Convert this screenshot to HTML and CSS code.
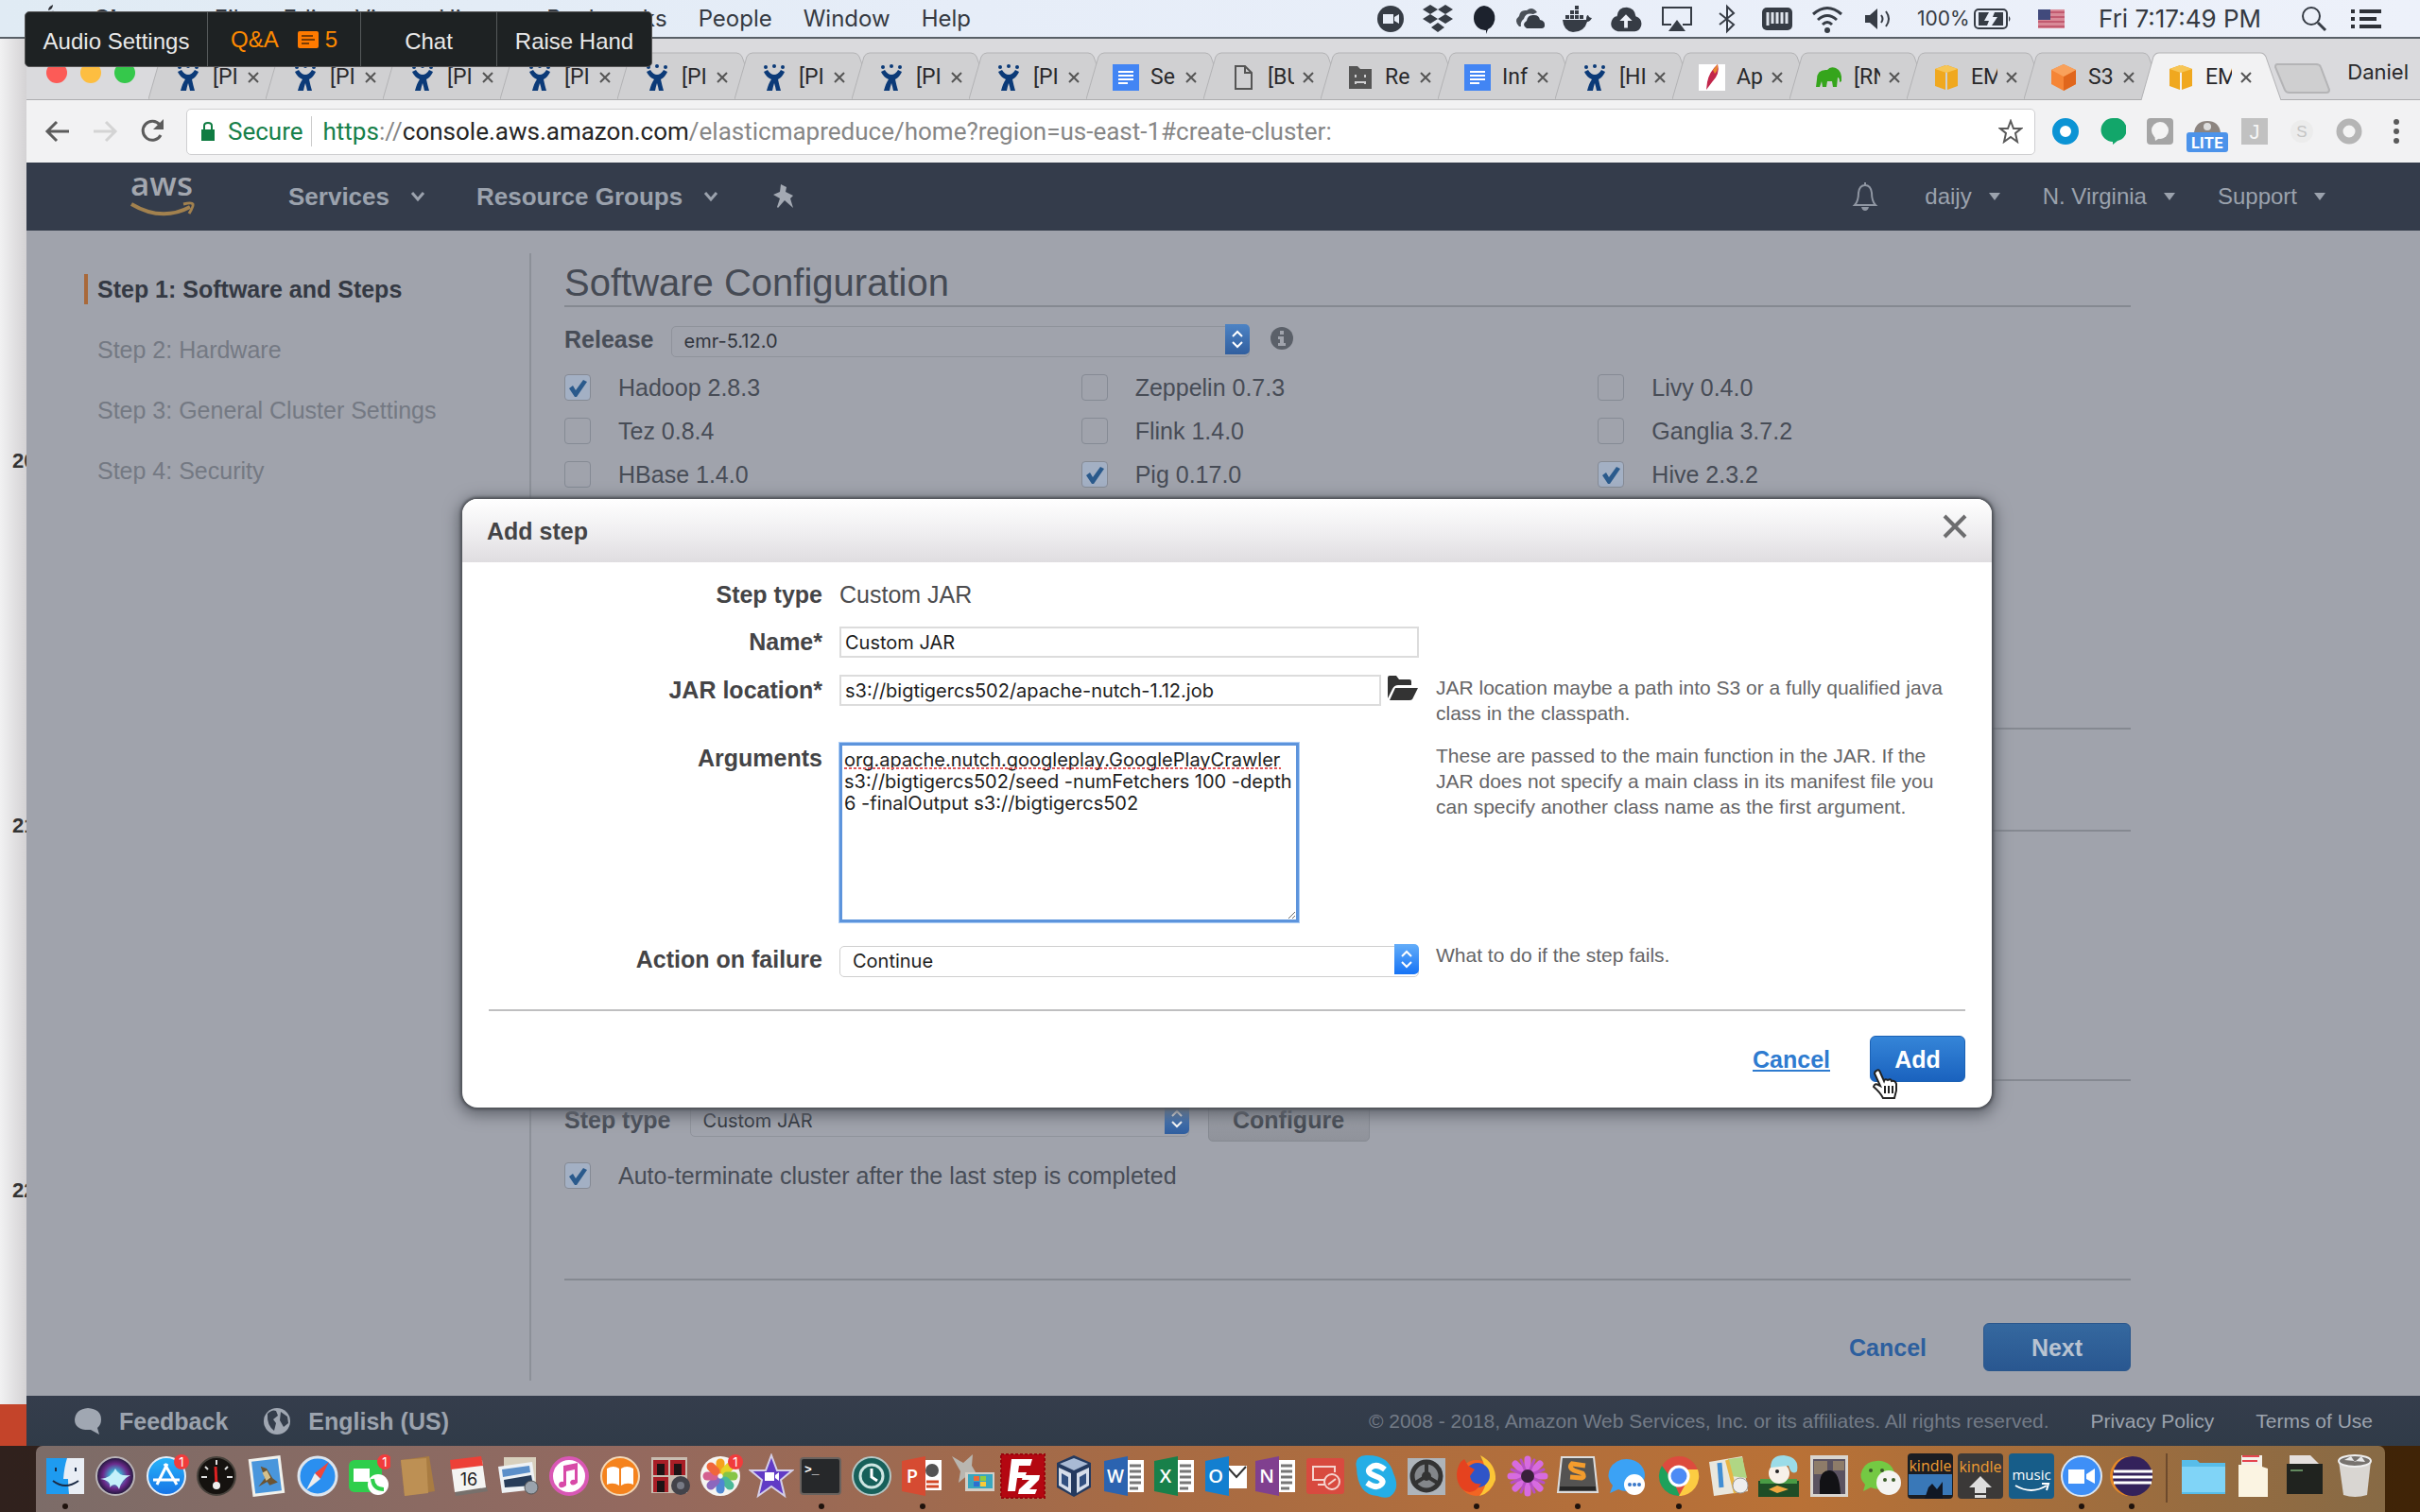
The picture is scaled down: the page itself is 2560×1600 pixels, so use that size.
FILE: index.html
```html
<!DOCTYPE html>
<html lang="en">
<head>
<meta charset="utf-8">
<title>EMR - Create Cluster</title>
<link rel="stylesheet" href="styles.css">
</head>
<body>
<svg class="defs" aria-hidden="true">
  <defs>
    <symbol id="tab" viewBox="0 0 148 50" preserveAspectRatio="none"><path d="M0 50 13 5Q15 1 19 1H126Q130 1 132 5L148 50"/></symbol>
    <symbol id="close" viewBox="0 0 14 14"><path d="M2 2 12 12M12 2 2 12" stroke="#555" stroke-width="2" fill="none"/></symbol>
    <symbol id="jira" viewBox="0 0 28 28"><g fill="#0b3a78"><circle cx="5" cy="3" r="2"/><circle cx="14" cy="2" r="2"/><circle cx="23" cy="3" r="2"/><path d="M3 8 7 6Q10 11 14 11T21 6L25 8Q23 13 18 16 19 21 21 28H16Q15 23 14 20 13 23 12 28H6Q8 20 11 16 5 13 3 8Z"/></g></symbol>
    <symbol id="doc" viewBox="0 0 28 28"><path fill="#4285f4" d="M0 0H28V28H0Z"/><path stroke="#fff" stroke-width="2" d="M6 8H22M6 12H22M6 16H22M6 20H16"/></symbol>
    <symbol id="emr" viewBox="0 0 28 28"><path fill="#f0a81f" d="M2 5 13 1 13 27 2 23ZM15 1 26 5V23L15 27Z"/><path fill="#f7c656" d="M2 5 14 1 26 5 14 9Z"/></symbol>
    <symbol id="tick" viewBox="0 0 28 28"><path fill="#2a5a8c" d="M5 15 9 12 12 17 20 6 24 8 13 24H11Z"/></symbol>
    <symbol id="updown" viewBox="0 0 26 32"><path fill="none" stroke="#fff" stroke-width="2" d="M8 13 13 8 18 13M8 19 13 24 18 19"/></symbol>
    <symbol id="caret" viewBox="0 0 14 10"><path fill="currentColor" d="M1 1H13L7 9Z"/></symbol>
    <symbol id="chev" viewBox="0 0 16 12"><path fill="none" stroke="currentColor" stroke-width="3" d="M2 2 8 9 14 2"/></symbol>
    <symbol id="pages" viewBox="0 0 18 34"><path fill="#fff" d="M0 0H18V34H0Z"/><path stroke="#777" stroke-width="3" d="M3 6H15M3 12H15M3 18H15M3 24H15M3 30H12"/></symbol>
    <radialGradient id="siri"><stop stop-color="#e8fbff"/><stop offset=".3" stop-color="#3fa9cf"/><stop offset=".65" stop-color="#6b2a8c"/><stop offset="1" stop-color="#1b1635"/></radialGradient>
    <linearGradient id="sky" x2="0" y2="1"><stop stop-color="#27b4fa"/><stop offset="1" stop-color="#1673e6"/></linearGradient>
  </defs>
</svg>

<header class="menubar">
  <nav class="menus" aria-label="Application menu">
    <svg class="apple" viewBox="0 0 22 28"><path fill="#2e3138" d="M15 0Q15 5 10 6 10 2 15 0ZM11 8Q16 5 20 9 16 12 17 16 18 20 21 21 18 28 14 28 11 26 8 28 4 28 1 20-1 10 5 8 8 7 11 8Z"/></svg>
    <b class="app-name">Chrome</b><span>File</span><span>Edit</span><span>View</span><span>History</span><span>Bookmarks</span><span>People</span><span>Window</span><span>Help</span>
  </nav>
  <div class="status">
    <div class="group tight">
      <svg viewBox="0 0 32 32"><circle cx="16" cy="16" r="14" fill="#363c45"/><path fill="#e7edf7" d="M8 11H19V21H8ZM20 14 25 11V21L20 18Z"/></svg>
      <svg viewBox="0 0 32 32"><path fill="#363c45" d="M8 1 16 6 8 11 0 6ZM24 1 32 6 24 11 16 6ZM8 11 16 16 8 21 0 16ZM24 11 32 16 24 21 16 16ZM16 20 23 25 16 30 9 25Z"/></svg>
      <svg viewBox="0 0 32 32"><path fill="#1c222d" d="M16 2A12 13 0 0 1 20 27L18 32V28A12 13 0 0 1 16 2Z"/></svg>
      <svg viewBox="0 0 32 32"><path fill="#4a5058" d="M4 24Q-2 18 4 13 5 6 12 7 18 2 23 9L19 11Q11 9 9 16 5 19 6 24Z"/><path fill="#363c45" d="M12 26Q6 22 12 18 13 11 20 12 25 12 26 17 32 18 31 24 30 26 28 26Z"/></svg>
      <svg viewBox="0 0 32 32"><path fill="#363c45" d="M1 17H26Q26 12 28 12 29 15 32 15 30 19 27 19 24 30 12 30 2 29 1 17ZM4 12H8V16H4ZM9 12H13V16H9ZM14 12H18V16H14ZM19 12H23V16H19ZM9 7H13V11H9ZM14 7H18V11H14ZM14 2H18V6H14Z"/></svg>
    </div>
    <div class="group">
      <svg viewBox="0 0 36 32"><path fill="#363c45" d="M9 30Q-1 27 2 18 4 13 8 13 9 3 19 3 28 4 29 13 37 16 35 24 33 30 28 30Z"/><path fill="#eef2fa" d="M18 11 25 18H20V26H16V18H11Z"/></svg>
      <svg viewBox="0 0 32 32"><path fill="none" stroke="#363c45" stroke-width="2" d="M10 22H1V4H31V22H22"/><path fill="#363c45" d="M16 17 25 29H7Z"/></svg>
      <svg viewBox="0 0 32 32"><path fill="none" stroke="#363c45" stroke-width="2" d="M8 10 23 22 16 29V3L23 10 8 22"/></svg>
      <svg viewBox="0 0 32 32"><rect y="4" width="32" height="24" rx="5" fill="#363c45"/><path stroke="#dfe4ec" stroke-width="3" d="M6 9V23M11 9V21M16 9V21M21 9V21M26 9V21"/></svg>
      <svg viewBox="0 0 32 32"><path fill="none" stroke="#363c45" stroke-width="3" d="M1 11Q16-2 31 11M6 17Q16 8 26 17M11 22Q16 17 21 22"/><circle cx="16" cy="28" r="3" fill="#363c45"/></svg>
      <svg viewBox="0 0 32 32"><path fill="#363c45" d="M3 12H8L16 5V27L8 20H3Z"/><path fill="none" stroke="#363c45" stroke-width="2" d="M20 12Q23 16 20 20M25 8Q31 16 25 24"/></svg>
    </div>
    <span class="pct">100%</span>
    <svg class="battery" viewBox="0 0 40 24"><rect x="1" y="2" width="34" height="20" rx="4" fill="none" stroke="#363c45" stroke-width="2"/><path fill="#363c45" d="M5 5H16L11 14H16L14 19H5ZM22 5H31V19H19L25 10H20ZM37 9Q40 12 37 15Z"/></svg>
    <svg class="flag" viewBox="0 0 28 20"><path fill="#d98a98" d="M0 0H28V20H0Z"/><path stroke="#c25a70" stroke-width="2" d="M0 3H28M0 8H28M0 13H28M0 18H28"/><path fill="#414a7c" d="M0 0H13V11H0Z"/></svg>
    <time>Fri 7:17:49 PM</time>
    <svg class="search" viewBox="0 0 28 28"><circle cx="11" cy="11" r="9" fill="none" stroke="#363c45" stroke-width="2"/><path stroke="#363c45" stroke-width="3" d="M18 18 26 26"/></svg>
    <svg viewBox="0 0 32 24"><path stroke="#2e3138" stroke-width="4" d="M0 4H4M0 12H4M0 20H4M9 4H32M9 12H27M9 20H32"/></svg>
  </div>
</header>

<div class="desktop">
  <div class="behind" aria-hidden="true"><span>20</span><span>21</span><span>22</span></div>
  <div class="window">
    <div class="tabstrip">
      <div class="lights"><i class="red"></i><i class="amber"></i><i class="green"></i></div>
      <div class="tabs">
        <div class="tab"><svg class="shape"><use href="#tab"/></svg><svg class="ico"><use href="#jira"/></svg><span>[PI</span><svg class="x"><use href="#close"/></svg></div>
        <div class="tab"><svg class="shape"><use href="#tab"/></svg><svg class="ico"><use href="#jira"/></svg><span>[PI</span><svg class="x"><use href="#close"/></svg></div>
        <div class="tab"><svg class="shape"><use href="#tab"/></svg><svg class="ico"><use href="#jira"/></svg><span>[PI</span><svg class="x"><use href="#close"/></svg></div>
        <div class="tab"><svg class="shape"><use href="#tab"/></svg><svg class="ico"><use href="#jira"/></svg><span>[PI</span><svg class="x"><use href="#close"/></svg></div>
        <div class="tab"><svg class="shape"><use href="#tab"/></svg><svg class="ico"><use href="#jira"/></svg><span>[PI</span><svg class="x"><use href="#close"/></svg></div>
        <div class="tab"><svg class="shape"><use href="#tab"/></svg><svg class="ico"><use href="#jira"/></svg><span>[PI</span><svg class="x"><use href="#close"/></svg></div>
        <div class="tab"><svg class="shape"><use href="#tab"/></svg><svg class="ico"><use href="#jira"/></svg><span>[PI</span><svg class="x"><use href="#close"/></svg></div>
        <div class="tab"><svg class="shape"><use href="#tab"/></svg><svg class="ico"><use href="#jira"/></svg><span>[PI</span><svg class="x"><use href="#close"/></svg></div>
        <div class="tab"><svg class="shape"><use href="#tab"/></svg><svg class="ico"><use href="#doc"/></svg><span>Se</span><svg class="x"><use href="#close"/></svg></div>
        <div class="tab"><svg class="shape"><use href="#tab"/></svg><svg class="ico" viewBox="0 0 28 28"><path fill="none" stroke="#555" stroke-width="2" d="M6 2H16L23 9V26H6ZM16 2V9H23"/></svg><span>[BU</span><svg class="x"><use href="#close"/></svg></div>
        <div class="tab"><svg class="shape"><use href="#tab"/></svg><svg class="ico" viewBox="0 0 28 28"><path fill="#555" d="M2 2H11L14 5H26V26H2Z"/><path fill="none" stroke="#d0d0d2" stroke-width="2" d="M9 11V14M19 11V14M9 21V19H19V21"/></svg><span>Re</span><svg class="x"><use href="#close"/></svg></div>
        <div class="tab"><svg class="shape"><use href="#tab"/></svg><svg class="ico"><use href="#doc"/></svg><span>Inf</span><svg class="x"><use href="#close"/></svg></div>
        <div class="tab"><svg class="shape"><use href="#tab"/></svg><svg class="ico"><use href="#jira"/></svg><span>[HI</span><svg class="x"><use href="#close"/></svg></div>
        <div class="tab"><svg class="shape"><use href="#tab"/></svg><svg class="ico" viewBox="0 0 28 28"><path fill="#fff" d="M0 0H28V28H0Z"/><path fill="#c2264b" d="M20 0Q23 10 14 19L8 27 9 19Q11 8 20 0Z"/><path fill="#e9862f" d="M20 0Q21 6 17 10L15 6Z"/></svg><span>Ap</span><svg class="x"><use href="#close"/></svg></div>
        <div class="tab"><svg class="shape"><use href="#tab"/></svg><svg class="ico" viewBox="0 0 28 28"><path fill="#35a51c" d="M1 16Q1 5 12 6 15 2 21 4 28 7 27 18L25 19Q25 14 23 14L22 24H18L17 18H12L11 24H7L6 18 4 24H0Z"/></svg><span>[RN</span><svg class="x"><use href="#close"/></svg></div>
        <div class="tab"><svg class="shape"><use href="#tab"/></svg><svg class="ico"><use href="#emr"/></svg><span>EM</span><svg class="x"><use href="#close"/></svg></div>
        <div class="tab"><svg class="shape"><use href="#tab"/></svg><svg class="ico" viewBox="0 0 28 28"><path fill="#f58536" d="M1 6 14 0 27 6V21L14 28 1 21Z"/><path fill="#e0661c" d="M14 13 27 6V21L14 28Z"/><path fill="#f9a15b" d="M1 6 14 0 27 6 14 13Z"/></svg><span>S3</span><svg class="x"><use href="#close"/></svg></div>
        <div class="tab active"><svg class="shape"><use href="#tab"/></svg><svg class="ico"><use href="#emr"/></svg><span>EM</span><svg class="x"><use href="#close"/></svg></div>
      </div>
      <svg class="newtab" viewBox="0 0 60 32"><path fill="#cfcfd0" stroke="#b4b4b6" stroke-width="2" d="M3 1H44Q48 1 49 4L58 28Q58 31 55 31H16Q12 31 11 28L1 4Q1 1 3 1Z"/></svg>
      <span class="profile">Daniel</span>
    </div>

    <div class="toolbar">
      <svg viewBox="0 0 28 28"><path fill="none" stroke="#5c5c5c" stroke-width="3" d="M26 14H3M13 4 3 14 13 24"/></svg>
      <svg viewBox="0 0 28 28"><path fill="none" stroke="#d4d4d4" stroke-width="3" d="M2 14H25M15 4 25 14 15 24"/></svg>
      <svg viewBox="0 0 28 28"><path fill="none" stroke="#5c5c5c" stroke-width="3" d="M23 18A10 10 0 1 1 22 7"/><path fill="#5c5c5c" d="M26 1V12H15Z"/></svg>
      <div class="omnibox">
        <svg class="lock" viewBox="0 0 16 22"><path fill="#0f7c42" d="M1 9H15V21H1Z"/><path fill="none" stroke="#0f7c42" stroke-width="2" d="M4 9V5Q4 2 8 2T12 5V9"/></svg>
        <span class="secure">Secure</span>
        <span class="url"><span class="ok">https</span>://<b>console.aws.amazon.com</b>/elasticmapreduce/home?region=us-east-1#create-cluster:</span>
        <svg class="star" viewBox="0 0 26 26"><path fill="none" stroke="#5a5a5a" stroke-width="2" d="M13 2 16 10H24L18 15 20 24 13 19 6 24 8 15 2 10H10Z"/></svg>
      </div>
      <div class="exts">
        <svg viewBox="0 0 28 28"><circle cx="14" cy="14" r="10" fill="#fff" stroke="#0b93d4" stroke-width="8"/></svg>
        <svg viewBox="0 0 28 28"><path fill="#12a66a" d="M14 0A12 12 0 0 1 19 24L14 28V25A12 12 0 0 1 14 0Z"/></svg>
        <svg viewBox="0 0 28 28"><rect width="28" height="28" rx="4" fill="#a5a5a5"/><circle cx="14" cy="13" r="9" fill="#f4f4f4"/><path fill="#f4f4f4" d="M8 17 9 24 15 20Z"/></svg>
        <svg class="lite" viewBox="0 0 44 36"><path fill="#8d8580" d="M8 14Q10 2 22 2T36 14Z"/><circle cx="22" cy="8" r="4" fill="#ddd"/><rect y="14" width="44" height="21" rx="3" fill="#4c93ea"/><text x="22" y="31" text-anchor="middle" font-family="Inter" font-weight="700" font-size="16" fill="#fff">LITE</text></svg>
        <svg viewBox="0 0 28 28"><path fill="#c1c1c1" d="M0 0H28V28H0Z"/><text x="14" y="22" text-anchor="middle" font-family="Liberation Sans" font-size="22" fill="#f5f5f5">J</text></svg>
        <svg viewBox="0 0 28 28"><circle cx="14" cy="14" r="12" fill="#ececec"/><text x="14" y="20" text-anchor="middle" font-family="Liberation Sans" font-size="17" fill="#c4c4c4">S</text></svg>
        <svg viewBox="0 0 28 28"><circle cx="14" cy="14" r="10" fill="#f3f3f3" stroke="#b5b5b5" stroke-width="7"/></svg>
        <svg viewBox="0 0 28 28"><g fill="#5a5a5a"><circle cx="14" cy="4" r="3"/><circle cx="14" cy="14" r="3"/><circle cx="14" cy="24" r="3"/></g></svg>
      </div>
    </div>

    <nav class="aws">
      <svg class="logo" viewBox="0 0 70 46"><text x="34" y="22" text-anchor="middle" font-family="Open Sans" font-weight="600" font-size="35" fill="#a3a7af">aws</text><path fill="none" stroke="#a2814e" stroke-width="4" d="M2 31Q34 50 64 34"/><path fill="none" stroke="#a2814e" stroke-width="3" d="M57 31Q66 29 67 31T63 41"/></svg>
      <a href="#services" class="main-link">Services <svg class="chev"><use href="#chev"/></svg></a>
      <a href="#groups" class="main-link">Resource Groups <svg class="chev"><use href="#chev"/></svg></a>
      <svg class="pin" viewBox="0 0 22 26"><path fill="#a3a9b3" d="M8 0 14 3 13 8 21 12 18 15 21 25 12 17 5 25 4 24 7 15 0 11 7 8Z"/></svg>
      <div class="account">
        <svg class="bell" viewBox="0 0 28 32"><path fill="none" stroke="#8f96a2" stroke-width="2" d="M3 25Q7 21 7 12 8 4 14 4T21 12Q21 21 25 25ZM14 4V1"/><path fill="#8f96a2" d="M10 27H18Q17 31 14 31T10 27Z"/></svg>
        <a href="#account">daijy <svg class="caret"><use href="#caret"/></svg></a>
        <a href="#region">N. Virginia <svg class="caret"><use href="#caret"/></svg></a>
        <a href="#support">Support <svg class="caret"><use href="#caret"/></svg></a>
      </div>
    </nav>

    <main class="page">
      <aside class="steps">
        <a href="#step1" class="current">Step 1: Software and Steps</a>
        <a href="#step2">Step 2: Hardware</a>
        <a href="#step3">Step 3: General Cluster Settings</a>
        <a href="#step4">Step 4: Security</a>
      </aside>
      <section class="config">
        <h1>Software Configuration</h1>
        <div class="row release">
          <label for="release">Release</label>
          <div class="select wide"><select id="release"><option>emr-5.12.0</option></select><svg><use href="#updown"/></svg></div>
          <svg class="info" viewBox="0 0 24 24"><circle cx="12" cy="12" r="12" fill="#5b6069"/><path fill="#a0a3ac" d="M10 4H14V8H10ZM8 10H14V17H16V20H8V17H10V13H8Z"/></svg>
        </div>
        <div class="apps">
          <label><input type="checkbox" checked><svg><use href="#tick"/></svg>Hadoop 2.8.3</label>
          <label><input type="checkbox"><svg><use href="#tick"/></svg>Zeppelin 0.7.3</label>
          <label><input type="checkbox"><svg><use href="#tick"/></svg>Livy 0.4.0</label>
          <label><input type="checkbox"><svg><use href="#tick"/></svg>Tez 0.8.4</label>
          <label><input type="checkbox"><svg><use href="#tick"/></svg>Flink 1.4.0</label>
          <label><input type="checkbox"><svg><use href="#tick"/></svg>Ganglia 3.7.2</label>
          <label><input type="checkbox"><svg><use href="#tick"/></svg>HBase 1.4.0</label>
          <label><input type="checkbox" checked><svg><use href="#tick"/></svg>Pig 0.17.0</label>
          <label><input type="checkbox" checked><svg><use href="#tick"/></svg>Hive 2.3.2</label>
        </div>
        <div class="block settings"></div>
        <div class="block heading"></div>
        <div class="block list"></div>
        <div class="row add-step">
          <label for="steptype">Step type</label>
          <div class="select"><select id="steptype"><option>Custom JAR</option></select><svg><use href="#updown"/></svg></div>
          <button type="button" class="configure">Configure</button>
        </div>
        <div class="terminate"><label><input type="checkbox" checked><svg><use href="#tick"/></svg>Auto-terminate cluster after the last step is completed</label></div>
        <div class="actions"><a href="#cancel">Cancel</a><button type="button" class="next">Next</button></div>
      </section>

      <div class="overlay">
        <form class="modal" role="dialog" aria-labelledby="modal-title">
          <header>
            <h2 id="modal-title">Add step</h2>
            <button type="button" class="dismiss" aria-label="Close"><svg viewBox="0 0 26 26"><path stroke="#6d6d6f" stroke-width="4" d="M2 2 24 24M24 2 2 24"/></svg></button>
          </header>
          <div class="fields">
            <span class="name">Step type</span><span class="value">Custom JAR</span><span></span>
            <label class="name" for="name">Name*</label><input id="name" type="text" value="Custom JAR"><span></span>
            <label class="name" for="jar">JAR location*</label>
            <div class="with-icon"><input id="jar" type="text" value="s3://bigtigercs502/apache-nutch-1.12.job"><svg viewBox="0 0 34 28"><path fill="#333" d="M1 3Q1 1 3 1H10L13 5H24Q26 5 26 7V11H12Q8 11 6 15L1 25ZM9 14H33L27 26Q26 27 24 27H3Z"/></svg></div>
            <p>JAR location maybe a path into S3 or a fully qualified java class in the classpath.</p>
            <label class="name" for="args">Arguments</label>
            <div class="args"><textarea id="args" spellcheck="false">org.apache.nutch.googleplay.GooglePlayCrawler s3://bigtigercs502/seed -numFetchers 100 -depth 6 -finalOutput s3://bigtigercs502</textarea><i class="misspelt"></i></div>
            <p>These are passed to the main function in the JAR. If the JAR does not specify a main class in its manifest file you can specify another class name as the first argument.</p>
            <label class="name last" for="fail">Action on failure</label>
            <div class="select last"><select id="fail"><option>Continue</option></select><svg><use href="#updown"/></svg></div>
            <p class="last">What to do if the step fails.</p>
          </div>
          <footer>
            <a href="#close">Cancel</a>
            <div class="submit"><button type="button">Add</button>
              <svg class="pointer" viewBox="0 0 28 32"><path fill="#fff" stroke="#222" stroke-width="2" d="M5 2Q8 0 9 4L13 13Q14 10 17 12 20 10 21 13 25 12 26 16L26 23 24 31H12Q9 25 2 19 3 15 7 17L9 18 3 5Q3 3 5 2Z"/><path stroke="#222" stroke-width="2" d="M14 18V26M18 18V26M22 18V26"/></svg>
            </div>
          </footer>
        </form>
      </div>
    </main>

    <footer class="awsfoot">
      <a href="#feedback"><svg viewBox="0 0 30 30"><path fill="#a0a7b2" d="M15 1Q29 2 29 13 29 19 25 22L27 29 18 24Q1 25 1 13 2 2 15 1Z"/></svg>Feedback</a>
      <a href="#language"><svg viewBox="0 0 30 30"><circle cx="15" cy="15" r="14" fill="#a0a7b2"/><path fill="#343d4b" d="M5 7Q10 2 14 4L16 9 11 13 14 17 12 25Q4 19 5 7ZM19 5 26 10 27 17 22 21 18 14Z"/></svg>English (US)</a>
      <small>© 2008 - 2018, Amazon Web Services, Inc. or its affiliates. All rights reserved.</small>
      <a class="legal" href="#privacy">Privacy Policy</a>
      <a class="legal" href="#terms">Terms of Use</a>
    </footer>
  </div>
</div>

<div class="dockbar">
  <div class="dock">
    <div class="apps-row">
      <div class="on"><svg viewBox="0 0 48 48"><path fill="#1e9bf0" d="M4 5H44V43H4Z"/><path fill="#e9eef5" d="M26 5H44V43H28Q27 34 27 27H22Q23 14 26 5Z"/><path fill="none" stroke="#1b2b45" stroke-width="2" d="M14 15V19M35 15V19M11 29Q24 39 38 29"/></svg></div>
      <div><svg viewBox="0 0 48 48"><circle cx="24" cy="24" r="20" fill="url(#siri)" stroke="#b9b4b8" stroke-width="2"/><path fill="#c4f1fb" d="M8 27Q20 26 24 16 28 25 40 23 30 28 28 38 24 29 18 36 20 29 8 27Z"/></svg></div>
      <div><svg viewBox="0 0 48 48"><circle cx="24" cy="24" r="20" fill="url(#sky)" stroke="#e4edf7" stroke-width="2"/><path stroke="#fff" stroke-width="3" d="M25 11 14 33M22 11 35 33M10 28H38"/><circle cx="40" cy="9" r="8" fill="#f13c3c"/><text x="40" y="14" text-anchor="middle" font-family="Inter" font-size="13" fill="#fff">1</text></svg></div>
      <div><svg viewBox="0 0 48 48"><circle cx="24" cy="24" r="20" fill="#15120f" stroke="#47423c" stroke-width="2"/><path stroke="#d22" stroke-width="3" d="M23 14 24 34"/><circle cx="24" cy="34" r="4" fill="#eee"/><path stroke="#ddd" stroke-width="2" d="M8 25H14M35 25H41M24 7V12M12 14 15 17M33 17 36 14"/></svg></div>
      <div><svg viewBox="0 0 48 48"><g transform="rotate(-7 24 24)"><path fill="#f1f1ec" d="M7 4H41V44H7Z"/><path fill="#4996dc" d="M10 7H38V41H10Z"/><path fill="#6b5433" d="M14 34 22 26 19 13 25 16 30 27 35 32 26 34 24 30Z"/><path fill="#d3c08d" d="M20 20 25 18 28 26 23 29Z"/></g></svg></div>
      <div><svg viewBox="0 0 48 48"><circle cx="24" cy="24" r="20" fill="#2a8ff0" stroke="#dde5ee" stroke-width="3"/><path fill="#f0463a" d="M36 9 27 27 21 21Z"/><path fill="#eee" d="M12 39 21 21 27 27Z"/></svg></div>
      <div><svg viewBox="0 0 48 48"><rect x="4" y="7" width="35" height="34" rx="6" fill="#2fce4c"/><path fill="#fff" d="M9 16H26V30H9Z"/><circle cx="35" cy="33" r="11" fill="#fff"/><path fill="none" stroke="#2fce4c" stroke-width="4" d="M29 27Q30 38 41 38"/><circle cx="42" cy="9" r="8" fill="#f13c3c"/><text x="42" y="14" text-anchor="middle" font-family="Inter" font-size="13" fill="#fff">1</text></svg></div>
      <div><svg viewBox="0 0 48 48"><path fill="#a97c42" d="M6 7 36 3 42 40 10 45Z"/><path fill="#bd9054" d="M6 7 33 5 35 42 10 45Z"/></svg></div>
      <div><svg viewBox="0 0 48 48"><path fill="#77706c" d="M9 39 42 34 44 40 10 45Z"/><path fill="#f4f4f2" d="M5 11 38 7 42 36 9 41Z"/><path fill="#ed4037" d="M4 7 37 3 39 13 5 17Z"/><text x="24" y="34" text-anchor="middle" font-family="Inter" font-size="18" fill="#222">16</text></svg></div>
      <div><svg viewBox="0 0 48 48"><path fill="#d8d0bd" d="M8 4H42V37H8Z"/><path fill="#eef2f5" d="M2 14 38 9 42 38 6 42Z"/><path fill="#5b8fc9" d="M6 17 35 13 36 20 7 25Z"/><path fill="#273d5a" d="M8 28 37 23 39 34 9 36Z"/><circle cx="37" cy="36" r="7" fill="#9aa3ad" stroke="#555"/></svg></div>
      <div><svg viewBox="0 0 48 48"><circle cx="24" cy="24" r="19" fill="#fff" stroke="#d957b5" stroke-width="4"/><path fill="#d84aa8" d="M18 13 33 10V31Q27 36 25 31 26 27 30 28V17L21 19V34Q14 39 13 33 14 29 18 30Z"/></svg></div>
      <div><svg viewBox="0 0 48 48"><circle cx="24" cy="24" r="20" fill="#f5831e" stroke="#f4d8b7" stroke-width="2"/><path fill="#fff" d="M10 16Q17 12 23 16V34Q17 30 10 33ZM25 16Q31 12 38 16V33Q31 30 25 34Z"/></svg></div>
      <div><svg viewBox="0 0 48 48"><path fill="#c8bcb0" d="M4 4H42V42H4Z"/><path fill="#a81e26" d="M6 7H22V23H6ZM24 7H40V23H24ZM6 25H22V41H6Z"/><path fill="#1e1315" d="M10 11H18V23H10ZM28 11H36V23H28ZM10 29H18V41H10Z"/><circle cx="35" cy="34" r="10" fill="#43434a"/><circle cx="35" cy="34" r="4" fill="#777a85"/></svg></div>
      <div><svg viewBox="0 0 48 48"><circle cx="24" cy="24" r="21" fill="#f5f4f1"/><g stroke-width="9" stroke-linecap="round"><path stroke="#f5a21d" d="M24 17V10"/><path stroke="#e7d326" d="M29 19 34 14"/><path stroke="#86c545" d="M31 24H38"/><path stroke="#4bb997" d="M29 29 34 34"/><path stroke="#4f87d2" d="M24 31V38"/><path stroke="#8c67bd" d="M19 29 14 34"/><path stroke="#d4608f" d="M17 24H10"/><path stroke="#f0663b" d="M19 19 14 14"/></g><circle cx="40" cy="9" r="8" fill="#f13c3c"/><text x="40" y="14" text-anchor="middle" font-family="Inter" font-size="13" fill="#fff">1</text></svg></div>
      <div><svg viewBox="0 0 48 48"><path fill="#613bc5" stroke="#d5cfe7" stroke-width="2" d="M24 2 30 18H46L34 28 38 45 24 35 10 45 14 28 2 18H18Z"/><path fill="#fff" d="M17 20H27V29H17ZM28 23 32 20V29L28 26Z"/></svg></div>
      <div class="on"><svg viewBox="0 0 48 48"><rect x="2" y="5" width="42" height="38" rx="3" fill="#26282a" stroke="#69625e" stroke-width="2"/><text x="6" y="21" font-family="Liberation Mono" font-weight="700" font-size="13" fill="#fff">&gt;_</text></svg></div>
      <div><svg viewBox="0 0 48 48"><circle cx="24" cy="24" r="20" fill="#17605a" stroke="#b4c7c5" stroke-width="2"/><circle cx="24" cy="24" r="12" fill="none" stroke="#cde6e2" stroke-width="3"/><path fill="none" stroke="#fff" stroke-width="3" d="M24 16V25L30 29"/></svg></div>
      <div class="on"><svg viewBox="0 0 48 48"><path fill="#fff" d="M24 7H44V39H24Z"/><circle cx="34" cy="18" r="7" fill="#535353"/><path stroke="#d24726" stroke-width="3" d="M28 30H41M28 35H41"/><path fill="#d64b32" d="M2 8 27 3V45L2 40Z"/><text x="13" y="31" text-anchor="middle" font-family="Open Sans" font-weight="600" font-size="20" fill="#fff">P</text></svg></div>
      <div><svg viewBox="0 0 48 48"><path fill="#b9b6b0" d="M2 3 14 10 24 1 23 13 30 25 20 22 9 31 11 19Z"/><path fill="#d2cec6" d="M16 20H47V40H16Z"/><path fill="#39a6bf" d="M19 22H45V37H19Z"/><path fill="#ef6a36" d="M25 24H31V29H25Z"/><path fill="#8fcc3f" d="M32 24H38V29H32Z"/><path fill="#2f6fd0" d="M25 30H31V35H25Z"/><path fill="#fac938" d="M32 30H38V35H32Z"/></svg></div>
      <div><svg viewBox="0 0 48 48"><path fill="#b40711" stroke="#9a040c" stroke-width="2" stroke-dasharray="3 2" d="M1 1H47V47H1Z"/><path fill="#fff" d="M12 6H34L32 13H20L19 20H28L26 26H18L16 40H8ZM24 23H42L41 28 31 38H39L37 43H19L20 38 31 28H23Z"/></svg></div>
      <div><svg viewBox="0 0 48 48"><path fill="#243a5f" d="M6 10 24 2 42 10V36L24 46 6 36Z"/><path fill="#a9bad4" d="M9 11 24 5 39 11 24 18Z"/><path fill="#d6deea" d="M8 15 21 21V42L8 34ZM27 21 40 15V34L27 42Z"/><path fill="#315080" d="M11 21 18 25V36L11 32ZM30 25 37 21V32L30 36Z"/></svg></div>
      <div><svg viewBox="0 0 48 48"><use href="#pages" x="27" y="7" width="18" height="34"/><path fill="#2b63b0" d="M3 8 28 3V45L3 40Z"/><text x="15" y="31" text-anchor="middle" font-family="Open Sans" font-weight="600" font-size="19" fill="#fff">W</text></svg></div>
      <div><svg viewBox="0 0 48 48"><use href="#pages" x="27" y="7" width="18" height="34"/><path fill="#18804a" d="M3 8 28 3V45L3 40Z"/><text x="15" y="31" text-anchor="middle" font-family="Open Sans" font-weight="600" font-size="20" fill="#fff">X</text></svg></div>
      <div><svg viewBox="0 0 48 48"><path fill="#fff" d="M20 13H47V37H20Z"/><path fill="none" stroke="#333" stroke-width="2" d="M26 14 36 25 46 14"/><path fill="#137fd0" d="M3 8 28 3V45L3 40Z"/><text x="14" y="31" text-anchor="middle" font-family="Open Sans" font-weight="600" font-size="20" fill="#fff">O</text></svg></div>
      <div><svg viewBox="0 0 48 48"><use href="#pages" x="27" y="7" width="18" height="34"/><path fill="#80408f" d="M3 8 28 3V45L3 40Z"/><text x="15" y="31" text-anchor="middle" font-family="Open Sans" font-weight="600" font-size="20" fill="#fff">N</text></svg></div>
      <div><svg viewBox="0 0 48 48"><rect x="4" y="5" width="40" height="38" rx="3" fill="#d84a3f"/><path fill="none" stroke="#f5d4cf" stroke-width="2" d="M24 28H11V14H34V20M16 33H23"/><circle cx="31" cy="30" r="8" fill="none" stroke="#f5d4cf" stroke-width="2"/><path stroke="#f5d4cf" stroke-width="2" d="M27 33 35 27"/></svg></div>
      <div><svg viewBox="0 0 48 48"><path fill="#25aee6" d="M3 15Q0 3 13 2 37 1 42 21 50 38 38 46 32 48 25 45 4 44 3 15Z"/><path fill="none" stroke="#fff" stroke-width="6" d="M33 17Q24 10 18 15T23 24 29 33 14 31"/></svg></div>
      <div><svg viewBox="0 0 48 48"><path fill="#aeb4ba" d="M4 5H44V44H4Z"/><circle cx="24" cy="24" r="15" fill="#83868a" stroke="#333" stroke-width="5"/><circle cx="24" cy="24" r="5" fill="#333"/><path stroke="#333" stroke-width="4" d="M24 24V9M24 24 37 32M24 24 11 32"/></svg></div>
      <div class="on"><svg viewBox="0 0 48 48"><circle cx="24" cy="26" r="19" fill="#f26522"/><path fill="#fbc536" d="M28 2Q45 11 44 28 39 42 27 45 41 29 28 2Z"/><circle cx="25" cy="23" r="13" fill="#2f55c8"/><path fill="#e5421f" d="M3 22Q4 10 11 6L15 13 22 17 17 24Q19 34 29 32 20 46 9 38 3 32 3 22Z"/></svg></div>
      <div><svg viewBox="0 0 48 48"><g stroke="#d76be0" stroke-width="7" stroke-linecap="round"><path d="M24 24 24 6M24 24 37 11M24 24 42 24M24 24 37 37M24 24 24 42M24 24 11 37M24 24 6 24M24 24 11 11"/><path stroke="#b74fc4" stroke-width="3" d="M24 24 31 7M24 24 41 17M24 24 41 31M24 24 31 41M24 24 17 41M24 24 7 31M24 24 7 17M24 24 17 7"/></g><circle cx="24" cy="24" r="7" fill="#39203b"/></svg></div>
      <div class="on"><svg viewBox="0 0 48 48"><path fill="#545352" stroke="#ddd" stroke-width="2" d="M7 4H41L45 41H3Z"/><path fill="#262626" d="M5 35H43V39H5Z"/><path fill="none" stroke="#f39c2d" stroke-width="5" d="M32 13 18 11Q14 15 20 18L29 21Q32 25 28 26L16 25"/></svg></div>
      <div><svg viewBox="0 0 48 48"><path fill="#3ba2f5" d="M23 6A19 17 0 1 1 14 38L5 42 8 34A19 17 0 0 1 23 6Z"/><circle cx="31" cy="33" r="11" fill="#fff"/><g fill="#3b79c9"><circle cx="26" cy="33" r="2"/><circle cx="31" cy="33" r="2"/><circle cx="36" cy="33" r="2"/></g></svg></div>
      <div class="on"><svg viewBox="0 0 48 48"><circle cx="24" cy="24" r="21" fill="#dd4b3e"/><path fill="#1da15b" d="M6 13 18 29 25 45A21 21 0 0 1 6 13Z"/><path fill="#fccc42" d="M33 17H44A21 21 0 0 1 24 45L33 29Z"/><circle cx="24" cy="24" r="10" fill="#4c8bf5" stroke="#fff" stroke-width="3"/></svg></div>
      <div><svg viewBox="0 0 48 48"><path fill="#e9e7dd" d="M3 9 38 3 44 40 8 45Z"/><path fill="#b0d684" d="M23 6 38 4 43 26 26 24Z"/><path stroke="#e8b544" stroke-width="4" d="M22 7 31 42"/><path stroke="#418ed3" stroke-width="5" d="M14 10 16 36"/><circle cx="36" cy="34" r="8" fill="#eee" stroke="#999"/></svg></div>
      <div><svg viewBox="0 0 48 48"><path fill="#1f4d26" d="M2 29H45V46H2Z"/><path fill="#4a9b45" d="M4 27H43V32H4Z"/><circle cx="24" cy="21" r="11" fill="#f7f1e9"/><path fill="#9bdce8" d="M15 15Q15 2 29 2 46 4 43 19 37 24 34 13Z"/><circle cx="22" cy="19" r="2" fill="#222"/><path fill="#f0a63f" d="M13 38 22 34 34 38 22 42Z"/></svg></div>
      <div><svg viewBox="0 0 48 48"><path fill="#d9d5cf" d="M4 2H44V46H4Z"/><path fill="#5b5361" d="M7 6H41V43H7Z"/><path fill="#8e7c69" d="M8 8H22V22H8ZM28 8H40V18H28Z"/><path fill="#121215" d="M14 43V29Q16 17 25 18 35 19 36 43Z"/></svg></div>
      <div><svg viewBox="0 0 48 48"><path fill="#74c943" d="M20 8A17 15 0 1 1 14 36L6 40 8 33A17 15 0 0 1 20 8Z"/><circle cx="33" cy="31" r="13" fill="#f4f4f2"/><g fill="#3a5b29"><circle cx="14" cy="18" r="2"/><circle cx="26" cy="18" r="2"/><circle cx="29" cy="28" r="2"/><circle cx="38" cy="28" r="2"/></g></svg></div>
      <div><svg viewBox="0 0 48 48"><rect width="48" height="48" rx="4" fill="#1b1d22"/><path fill="#3978b8" d="M1 22H47V44H1Z"/><path fill="#101724" d="M18 48 22 36 26 32 31 38 37 30V48Z"/><text x="24" y="19" text-anchor="middle" font-family="Open Sans" font-size="16" fill="#ef9c32">kindle</text></svg></div>
      <div><svg viewBox="0 0 48 48"><rect width="48" height="48" rx="4" fill="#3b3938"/><path fill="#ddd" d="M24 24 36 36H30V42H18V36H12ZM18 44H30V47H18Z"/><text x="24" y="20" text-anchor="middle" font-family="Open Sans" font-size="16" fill="#ef9c32">kindle</text></svg></div>
      <div><svg viewBox="0 0 48 48"><rect width="48" height="48" rx="4" fill="#175d89"/><path fill="none" stroke="#fff" stroke-width="2" d="M7 34Q24 44 40 34M35 32H42L40 39"/><text x="24" y="28" text-anchor="middle" font-family="Open Sans" font-size="15" fill="#fff">music</text></svg></div>
      <div class="on"><svg viewBox="0 0 48 48"><circle cx="24" cy="24" r="21" fill="#3e8ff7" stroke="#dce6f2" stroke-width="2"/><path fill="#fff" d="M10 17H27V32H10ZM29 22 38 16V32L29 27Z"/></svg></div>
      <div class="on"><svg viewBox="0 0 48 48"><circle cx="22" cy="24" r="21" fill="#e78a27"/><circle cx="25" cy="24" r="21" fill="#33225b"/><path stroke="#fff" stroke-width="3" d="M5 19H46M4 25H46M5 31H45"/></svg></div>
    </div>
    <i class="rule"></i>
    <div class="apps-row places">
      <div><svg viewBox="0 0 48 48"><path fill="#58bde9" d="M1 7H17L20 10H47V43H1Z"/><path fill="#80d4f7" d="M1 14H47V41H1Z"/></svg></div>
      <div><svg viewBox="0 0 48 48"><path fill="#f5f1ea" d="M11 2H33V44H11Z"/><path stroke="#e54550" stroke-width="2" d="M12 3H30M12 8H28"/><path fill="#fbf4e2" d="M8 12H27L39 16V46H8Z"/></svg></div>
      <div><svg viewBox="0 0 48 48"><path fill="#e5e0de" d="M8 2H30L40 12V20H8Z"/><path fill="#20231f" d="M5 11H43V43H5Z"/><path stroke="#638a5f" stroke-width="2" d="M9 18H22"/></svg></div>
      <div><svg viewBox="0 0 48 48"><path fill="#d9d6d2" d="M7 8H41L37 44Q24 48 12 44Z"/><ellipse cx="24" cy="8" rx="17" ry="6" fill="#77736f" stroke="#efefef" stroke-width="2"/><path fill="#e9e9e9" d="M13 7 20 3 24 9 31 3 35 9Z"/></svg></div>
    </div>
  </div>
</div>

<div class="callbar">
  <button type="button">Audio Settings</button>
  <button type="button" class="qa">Q&amp;A <span><svg viewBox="0 0 22 18"><rect width="22" height="18" rx="2" fill="#ff7a00"/><path stroke="#7a3c05" stroke-width="2" d="M4 5H16M4 9H18M4 13H12"/></svg>5</span></button>
  <button type="button">Chat</button>
  <button type="button">Raise Hand</button>
</div>
</body>
</html>
```
FILE: styles.css
```css
* { box-sizing: border-box; }
body {
  margin: 0;
  min-height: 100vh;
  display: flex;
  flex-direction: column;
  position: relative;
  background: #2f1d13;
  color: #474c56;
  font: 25px/32px "Liberation Sans", Arial, sans-serif;
}
a { color: inherit; text-decoration: none; }
h1, h2, p { margin: 0; }
svg { flex: none; display: block; }
button, input, select, textarea { font: inherit; color: inherit; margin: 0; }
.defs { position: absolute; width: 0; height: 0; }

/* macOS menu bar */
.menubar {
  display: flex;
  justify-content: space-between;
  height: 41px;
  padding: 0 41px;
  border-bottom: 2px solid #596067;
  background: linear-gradient(90deg, #e0ebf4, #e6edf8 40%, #edf1fa);
  color: #353a42;
  font: 24px/39px Inter, sans-serif;
}
.menus { display: flex; gap: 33px; white-space: nowrap; }
.apple { width: 22px; height: 28px; margin: 5px 3px 0 0; }
.app-name { margin-right: 2px; }
.status { display: flex; align-items: center; }
.status svg { width: 32px; height: 32px; }
.group { display: flex; gap: 21px; margin-right: 26px; }
.group.tight { gap: 17px; margin-right: 19px; }
.status .group svg:first-child { width: 34px; }
.status .pct { width: 60px; font-size: 21px; }
.status .battery { width: 40px; height: 26px; }
.status .flag { width: 28px; height: 22px; margin: 0 36px 0 28px; }
.status time { font-size: 26px; }
.status .search { width: 28px; height: 28px; margin: 0 25px 0 42px; }

/* Call controls floating over the desktop */
.callbar {
  position: absolute;
  top: 12px;
  left: 26px;
  display: grid;
  grid-template-columns: 193px 162px 144px 163px;
  height: 59px;
  border: 1px solid #555;
  border-radius: 5px;
  overflow: hidden;
  background: #1e2223;
}
.callbar button {
  border: 0;
  border-right: 1px solid #55595a;
  padding: 5px 0 0;
  background: none;
  color: #e9e9e9;
  font-size: 24px;
  white-space: nowrap;
}
.callbar button:last-child { border: 0; }
.callbar .qa { display: flex; align-items: center; justify-content: center; gap: 20px; padding-top: 0; color: #ff8a00; }
.callbar .qa span { display: flex; align-items: center; gap: 7px; font-size: 24px; }
.callbar .qa svg { width: 22px; height: 18px; }

.desktop { flex: 1; display: flex; }
.behind {
  width: 28px;
  flex: none;
  display: flex;
  flex-direction: column;
  gap: 354px;
  padding: 431px 0 0 13px;
  overflow: hidden;
  border-bottom: 44px solid #c4442a;
  background: linear-gradient(90deg, #f1f1f2, #d4d2d4);
  color: #333;
  font-size: 22px;
  font-weight: 700;
}
.window { flex: 1; min-width: 0; display: flex; flex-direction: column; }

/* Browser tabs */
.tabstrip { display: flex; height: 65px; padding-top: 14px; background: #dadadd; border-bottom: 1px solid #adadaf; }
.lights { display: flex; gap: 14px; width: 129px; padding: 11px 0 0 21px; }
.lights i { width: 22px; height: 22px; border-radius: 50%; }
.red { background: #fc5b57; }
.amber { background: #fdbe41; }
.green { background: #35c84b; }
.tabs { display: flex; }
.tab {
  position: relative;
  display: flex;
  align-items: center;
  width: 148px;
  height: 51px;
  margin-right: -24px;
  padding: 2px 0 0 28px;
  color: #29292b;
  font: 23px/28px Roboto, sans-serif;
}
.tab .shape { position: absolute; inset: 0; width: 148px; height: 50px; fill: #d0d0d2; stroke: #b2b2b4; stroke-width: 1px; }
.tab.active .shape { height: 51px; fill: #f2f2f3; }
.tab .ico { position: relative; width: 28px; height: 28px; }
.tab span { position: relative; width: 28px; margin: 0 8px 0 12px; overflow: hidden; }
.tab .x { position: relative; width: 14px; height: 14px; }
.newtab { width: 60px; height: 32px; margin: 12px 0 0 17px; }
.profile { margin-left: auto; padding: 5px 12px 0 0; color: #29292b; font: 22px/32px Inter, sans-serif; }

/* Browser toolbar */
.toolbar { display: flex; align-items: center; gap: 22px; height: 66px; padding: 0 11px 0 19px; background: #f2f2f3; color: #868686; font: 26px/32px Roboto, sans-serif; }
.toolbar > svg { width: 28px; height: 28px; }
.omnibox { flex: 1; display: flex; align-items: center; height: 49px; padding: 0 12px 0 14px; border: 1px solid #cfcfd1; border-radius: 5px; background: #fff; }
.lock { width: 16px; height: 22px; }
.secure { margin: 0 8px 0 13px; color: #17804a; }
.url { border-left: 1px solid #ccc; padding-left: 12px; }
.ok { color: #17804a; }
.url b { color: #252525; font-weight: 400; }
.star { width: 26px; height: 26px; margin-left: auto; }
.exts { display: flex; align-items: center; gap: 22px; margin-left: -4px; }
.exts svg { width: 28px; height: 28px; }
.exts .lite { width: 44px; height: 36px; margin: 10px -8px 0; }

/* AWS navigation */
.aws { display: flex; align-items: center; height: 72px; padding: 0 99px 0 108px; background: #343c4b; color: #9ba2ad; }
.logo { width: 72px; height: 46px; margin: 0 97px 0 0; }
.main-link { display: flex; align-items: center; margin-right: 54px; font-size: 26px; font-weight: 700; }
.chev { width: 16px; height: 12px; margin-left: 22px; }
.pin { width: 22px; height: 26px; margin-left: 4px; }
.account { margin-left: auto; display: flex; align-items: center; gap: 44px; font-size: 24px; }
.account a { display: flex; align-items: center; gap: 17px; }
.caret { width: 14px; height: 10px; }
.bell { width: 28px; height: 32px; margin-right: 5px; }

/* Cluster form */
.page { flex: 1; display: flex; position: relative; background: #a0a3ac; }
.steps {
  width: 534px;
  flex: none;
  display: flex;
  flex-direction: column;
  gap: 32px;
  margin: 24px 0 16px;
  padding: 22px 0 0 61px;
  border-right: 2px solid #8c9098;
  color: #747983;
}
.steps a { border-left: 4px solid transparent; padding-left: 10px; }
.steps .current { border-color: #a9693a; color: #343943; font-weight: 700; }
.config { flex: 0 1 1657px; margin: 31px 40px 26px 35px; }
h1 { border-bottom: 2px solid #858991; color: #454a54; font-size: 40px; line-height: 48px; font-weight: 400; }
.row { display: flex; }
.row label { font-weight: 700; color: #484d57; }
.release { margin-top: 18px; gap: 18px; }
.select { position: relative; width: 528px; height: 33px; }
.select.wide { width: 612px; }
.select select {
  width: 100%;
  height: 100%;
  appearance: none;
  border: 1px solid #8f939b;
  border-radius: 5px;
  padding: 0 30px 0 13px;
  background: transparent;
  color: #31353d;
  font: 20px/24px Inter, sans-serif;
}
.select svg { position: absolute; top: 0; right: 0; width: 26px; height: 32px; border-radius: 0 5px 5px 0; background: linear-gradient(#4d83c4, #315f9f); }
.info { width: 24px; height: 24px; margin: 3px 0 0 4px; }
.apps { display: grid; grid-template-columns: 1fr 1fr 1fr; grid-auto-rows: 46px; align-items: center; margin: 11px 17px 0 0; }
.config input + svg { visibility: hidden; width: 28px; height: 28px; margin: 0 29px 0 -28px; }
.config input:checked + svg { visibility: visible; }
.apps label, .terminate label { display: flex; align-items: center; }
.config input { appearance: none; flex: none; width: 28px; height: 28px; border: 1px solid #858a94; border-radius: 4px; }
.config input:checked { background: #a3b0c4; }
.block { border-bottom: 2px solid #858991; }
.settings { height: 247px; }
.heading { height: 108px; }
.list { height: 264px; }
.add-step { align-items: center; gap: 20px; margin-top: 17px; }
.configure { width: 171px; height: 47px; border: 1px solid #868a92; border-radius: 5px; padding: 0; background: linear-gradient(#a2a5ad, #8f929a); color: #454a53; font-weight: 700; }
.terminate { padding: 20px 0 93px; border-bottom: 2px solid #858991; }
.actions { display: flex; justify-content: flex-end; align-items: center; gap: 60px; margin-top: 45px; font-weight: 700; color: #2d5f9e; }
.next { width: 156px; height: 51px; border: 1px solid #2b578c; border-radius: 6px; padding: 0; background: linear-gradient(#35689f, #295790); color: #b8c3d1; font-weight: 700; }

/* Add step dialog */
.overlay { position: absolute; inset: 0; display: flex; justify-content: center; align-items: flex-start; padding: 284px 0 0 8px; }
.modal { width: 1618px; border-radius: 16px; background: #fff; box-shadow: 0 0 3px 2px #4d5056, 0 4px 16px 4px #62666e; }
.modal header { display: flex; justify-content: space-between; height: 67px; padding: 18px 26px 0 26px; border-radius: 16px 16px 0 0; background: linear-gradient(#fff, #f0eff1 50%, #dfdde0); }
h2 { color: #444446; font-size: 25px; line-height: 32px; }
.dismiss { align-self: flex-start; width: 26px; height: 24px; margin-top: -2px; border: 0; padding: 0; background: none; }
.fields {
  display: grid;
  grid-template-columns: 381px 613px 550px;
  column-gap: 18px;
  row-gap: 18px;
  align-items: start;
  padding: 18px 0 36px;
  color: #4d4d4f;
}
.name { text-align: right; font-weight: 700; color: #444446; }
.fields input { width: 100%; height: 33px; border: 2px solid #dcdcdc; padding: 0 4px; background: #fff; color: #1d1d1d; font: 20px/24px Inter, sans-serif; }
.with-icon { display: flex; gap: 6px; }
.with-icon svg { width: 34px; height: 28px; }
.fields p { color: #656567; font-size: 21px; line-height: 27px; }
.args { position: relative; width: 486px; }
textarea {
  display: block;
  width: 486px;
  height: 190px;
  border: 3px solid #5d94dc;
  outline: 1px solid #a9cbf5;
  padding: 4px 2px;
  background: #fff;
  color: #1d1d1d;
  font: 20px/23px Inter, sans-serif;
}
.misspelt { position: absolute; left: 5px; top: 26px; width: 462px; height: 2px; background: repeating-linear-gradient(90deg, #e0565a 0 3px, transparent 3px 5px); }
.last { margin-top: 5px; }
.fields p.last { margin-top: 3px; }
.fields .select { width: 100%; }
.fields select { border-color: #cfcfcf; color: #1d1d1d; }
.fields .select svg { background: linear-gradient(#63adf9, #1673f5); }
.modal footer { display: flex; justify-content: flex-end; align-items: center; gap: 42px; margin: 0 28px; padding: 26px 0 27px; border-top: 2px solid #bfbfc0; font-weight: 700; }
.modal footer a { color: #2e7bd0; text-decoration: underline; }
.submit { position: relative; }
.submit button { width: 101px; height: 49px; border: 1px solid #1c62b5; border-radius: 6px; padding: 0; background: linear-gradient(#3585d8, #1a62be); color: #fff; font-weight: 700; }
.pointer { position: absolute; left: 2px; top: 35px; width: 28px; height: 32px; }

.awsfoot { display: flex; align-items: center; height: 53px; padding: 0 50px 0 50px; background: linear-gradient(#353d4c, #303b48); color: #9ca3ae; font-weight: 700; }
.awsfoot a { display: flex; align-items: center; gap: 18px; margin-right: 37px; }
.awsfoot svg { width: 30px; height: 30px; }
.awsfoot small { margin-left: auto; color: #737b87; font-size: 21px; font-weight: 400; }
.awsfoot .legal { margin: 0 0 0 44px; font-size: 21px; font-weight: 400; }

/* Dock */
.dockbar { padding: 0 37px 0 38px; background: linear-gradient(90deg, #30211d, #402407); }
.dock { display: flex; height: 70px; border-radius: 7px 7px 0 0; padding: 8px 8px 0 7px; background: linear-gradient(90deg, #7c6c68, #93695f 25%, #a86b43 48%, #b97136 75%, #876a45); }
.apps-row { flex: 1; display: flex; justify-content: space-between; }
.apps-row div { display: flex; flex-direction: column; align-items: center; gap: 5px; }
.apps-row svg { width: 48px; height: 48px; }
.on::after { content: ""; width: 6px; height: 6px; border-radius: 50%; background: #1e120c; }
.rule { width: 2px; height: 52px; margin: 0 14px 0 11px; background: #6d4a2d; }
.apps-row.places { flex: 0 0 208px; }
```
